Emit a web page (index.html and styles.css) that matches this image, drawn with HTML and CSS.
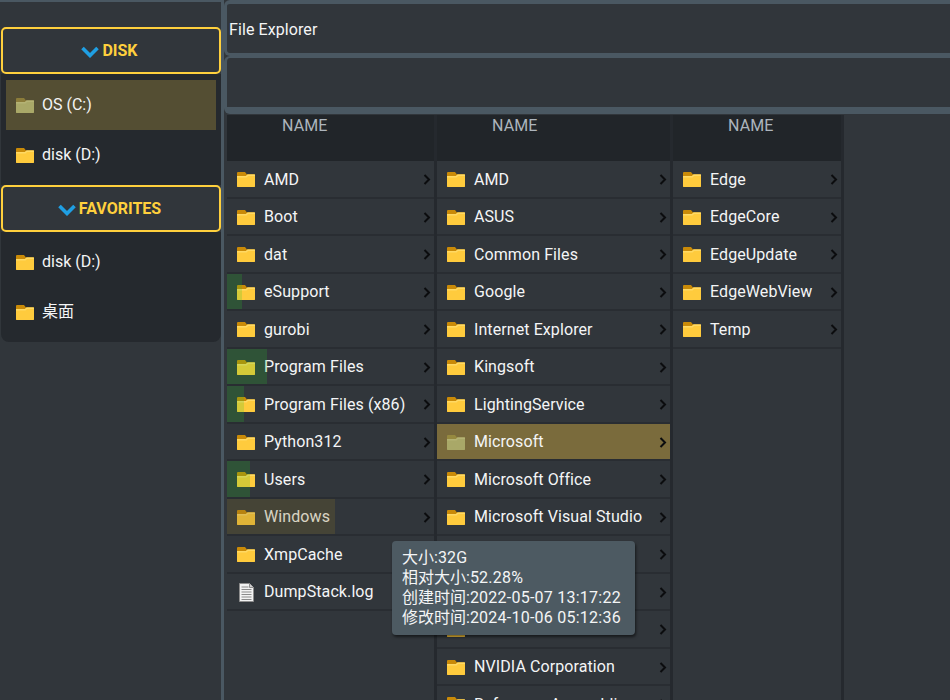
FILE: index.html
```html
<!DOCTYPE html>
<html lang="en">
<head>
<meta charset="utf-8">
<title>File Explorer</title>
<link rel="stylesheet" href="styles.css">
</head>
<body>
<svg class="defs" width="0" height="0" aria-hidden="true">
  <symbol id="folder" viewBox="0 0 18 15">
    <path d="M0 1a1 1 0 0 1 1-1h7l2 2.500H17a1 1 0 0 1 1 1V14a1 1 0 0 1-1 1H1a1 1 0 0 1-1-1z" fill="var(--tab)"/>
    <path d="M0 4h9l1.500-1.500h6.800a.7.700 0 0 1 .7.700V14.300a.7.700 0 0 1-.7.700H.7a.7.700 0 0 1-.7-.700z" fill="var(--body)"/>
    <path d="M0 4h9l1.500-1.500H18V4H11L9.500 5.500H0z" fill="var(--hi)"/>
  </symbol>
  <symbol id="file" viewBox="0 0 15 19">
    <path d="M.5.500h10l4 4v14H.5z" fill="#f2f2f2" stroke="#8d8d8d"/>
    <path d="M10.500.500v4h4" fill="#cfcfcf" stroke="#8d8d8d"/>
    <path d="M2.500 4h7M2.500 6.500h10M2.500 9h10M2.500 11.500h10M2.500 14h10M2.500 16.500h10" stroke="#8a8a8a" fill="none"/>
  </symbol>
  <symbol id="chev" viewBox="0 0 8 11">
    <path d="M1.500 1 6 5.500 1.500 10" fill="none" stroke="#0b0c0e" stroke-width="2"/>
  </symbol>
  <symbol id="down" viewBox="0 0 18 12">
    <path d="M1.500 2 9 9.500 16.500 2" fill="none" stroke="#1f9fe3" stroke-width="3.600"/>
  </symbol>
</svg>

<div class="app">
  <aside class="sidebar">
    <div class="sidebar-inner">
      <div class="group-head"><svg class="down"><use href="#down"/></svg><span>DISK</span></div>
      <ul class="group">
        <li class="drive is-current"><svg class="folder"><use href="#folder"/></svg>OS (C:)</li>
        <li class="drive"><svg class="folder"><use href="#folder"/></svg>disk (D:)</li>
      </ul>
      <div class="group-head"><svg class="down"><use href="#down"/></svg><span>FAVORITES</span></div>
      <ul class="group group-last">
        <li class="drive"><svg class="folder"><use href="#folder"/></svg>disk (D:)</li>
        <li class="drive"><svg class="folder"><use href="#folder"/></svg>桌面</li>
      </ul>
    </div>
  </aside>

  <main class="main">
    <div class="box box-title">File Explorer</div>
    <div class="box box-path"></div>
    <div class="columns">
      <section class="col col-a">
        <div class="col-head">NAME</div>
        <div class="row"><svg class="folder"><use href="#folder"/></svg><span class="name">AMD</span><svg class="chev"><use href="#chev"/></svg></div>
        <div class="row"><svg class="folder"><use href="#folder"/></svg><span class="name">Boot</span><svg class="chev"><use href="#chev"/></svg></div>
        <div class="row"><svg class="folder"><use href="#folder"/></svg><span class="name">dat</span><svg class="chev"><use href="#chev"/></svg></div>
        <div class="row"><i class="bar bar-green" style="width:15px"></i><svg class="folder"><use href="#folder"/></svg><span class="name">eSupport</span><svg class="chev"><use href="#chev"/></svg></div>
        <div class="row"><svg class="folder"><use href="#folder"/></svg><span class="name">gurobi</span><svg class="chev"><use href="#chev"/></svg></div>
        <div class="row"><i class="bar bar-green" style="width:40px"></i><svg class="folder"><use href="#folder"/></svg><span class="name">Program Files</span><svg class="chev"><use href="#chev"/></svg></div>
        <div class="row"><i class="bar bar-green" style="width:17px"></i><svg class="folder"><use href="#folder"/></svg><span class="name">Program Files (x86)</span><svg class="chev"><use href="#chev"/></svg></div>
        <div class="row"><svg class="folder"><use href="#folder"/></svg><span class="name">Python312</span><svg class="chev"><use href="#chev"/></svg></div>
        <div class="row"><i class="bar bar-green" style="width:23px"></i><svg class="folder"><use href="#folder"/></svg><span class="name">Users</span><svg class="chev"><use href="#chev"/></svg></div>
        <div class="row"><i class="bar bar-amber" style="width:108px"></i><svg class="folder"><use href="#folder"/></svg><span class="name">Windows</span><svg class="chev"><use href="#chev"/></svg></div>
        <div class="row"><svg class="folder"><use href="#folder"/></svg><span class="name">XmpCache</span><svg class="chev"><use href="#chev"/></svg></div>
        <div class="row"><svg class="file"><use href="#file"/></svg><span class="name">DumpStack.log</span></div>
      </section>
      <section class="col col-b">
        <div class="col-head">NAME</div>
        <div class="row"><svg class="folder"><use href="#folder"/></svg><span class="name">AMD</span><svg class="chev"><use href="#chev"/></svg></div>
        <div class="row"><svg class="folder"><use href="#folder"/></svg><span class="name">ASUS</span><svg class="chev"><use href="#chev"/></svg></div>
        <div class="row"><svg class="folder"><use href="#folder"/></svg><span class="name">Common Files</span><svg class="chev"><use href="#chev"/></svg></div>
        <div class="row"><svg class="folder"><use href="#folder"/></svg><span class="name">Google</span><svg class="chev"><use href="#chev"/></svg></div>
        <div class="row"><svg class="folder"><use href="#folder"/></svg><span class="name">Internet Explorer</span><svg class="chev"><use href="#chev"/></svg></div>
        <div class="row"><svg class="folder"><use href="#folder"/></svg><span class="name">Kingsoft</span><svg class="chev"><use href="#chev"/></svg></div>
        <div class="row"><svg class="folder"><use href="#folder"/></svg><span class="name">LightingService</span><svg class="chev"><use href="#chev"/></svg></div>
        <div class="row is-selected"><svg class="folder"><use href="#folder"/></svg><span class="name">Microsoft</span><svg class="chev"><use href="#chev"/></svg></div>
        <div class="row"><svg class="folder"><use href="#folder"/></svg><span class="name">Microsoft Office</span><svg class="chev"><use href="#chev"/></svg></div>
        <div class="row"><svg class="folder"><use href="#folder"/></svg><span class="name">Microsoft Visual Studio</span><svg class="chev"><use href="#chev"/></svg></div>
        <div class="row"><svg class="folder"><use href="#folder"/></svg><span class="name"></span><svg class="chev"><use href="#chev"/></svg></div>
        <div class="row"><svg class="folder"><use href="#folder"/></svg><span class="name"></span><svg class="chev"><use href="#chev"/></svg></div>
        <div class="row"><svg class="folder"><use href="#folder"/></svg><span class="name"></span><svg class="chev"><use href="#chev"/></svg></div>
        <div class="row"><svg class="folder"><use href="#folder"/></svg><span class="name">NVIDIA Corporation</span><svg class="chev"><use href="#chev"/></svg></div>
        <div class="row"><svg class="folder"><use href="#folder"/></svg><span class="name">Reference Assemblies</span><svg class="chev"><use href="#chev"/></svg></div>
      </section>
      <section class="col col-c">
        <div class="col-head">NAME</div>
        <div class="row"><svg class="folder"><use href="#folder"/></svg><span class="name">Edge</span><svg class="chev"><use href="#chev"/></svg></div>
        <div class="row"><svg class="folder"><use href="#folder"/></svg><span class="name">EdgeCore</span><svg class="chev"><use href="#chev"/></svg></div>
        <div class="row"><svg class="folder"><use href="#folder"/></svg><span class="name">EdgeUpdate</span><svg class="chev"><use href="#chev"/></svg></div>
        <div class="row"><svg class="folder"><use href="#folder"/></svg><span class="name">EdgeWebView</span><svg class="chev"><use href="#chev"/></svg></div>
        <div class="row"><svg class="folder"><use href="#folder"/></svg><span class="name">Temp</span><svg class="chev"><use href="#chev"/></svg></div>
      </section>
    </div>
  </main>
</div>

<div class="tooltip">
  <div>大小:<span class="num">32G</span></div>
  <div>相对大小:<span class="num">52.28%</span></div>
  <div>创建时间:<span class="num">2022-05-07 13:17:22</span></div>
  <div>修改时间:<span class="num">2024-10-06 05:12:36</span></div>
</div>
</body>
</html>
```

FILE: styles.css
```css
* { box-sizing: border-box; }

html, body {
  margin: 0;
  height: 100%;
  overflow: hidden;
  background: #31363b;
}

body {
  position: relative;
  color: #f4f5f6;
  font: 16px/20px Roboto, "Noto Sans CJK SC", sans-serif;
  --tab: #c98a08;
  --body: #ffcb3d;
  --hi: #ffd964;
}

.defs { position: absolute; }

ul { list-style: none; margin: 0; padding: 0; }

.app {
  display: flex;
  height: 700px;
  border-top: 2px solid #4a5862;
}

/* sidebar */
.sidebar {
  flex: 0 0 224px;
  padding: 25px 0 0 1px;
  border-right: 3px solid #4a5862;
}

.sidebar-inner {
  display: flex;
  flex-direction: column;
  width: 220px;
}

.group-head {
  display: flex;
  align-items: center;
  justify-content: center;
  gap: 3px;
  height: 47px;
  padding-right: 3px;
  border: 2px solid #ffd03d;
  border-radius: 5px;
  background: #31363b;
  color: #ffd03d;
  font-weight: 700;
}

.down { width: 18px; height: 12px; margin-top: 2px; }

.group {
  display: flex;
  flex-direction: column;
  padding: 6px 5px 5px;
  background: #25292e;
}

.group-last {
  padding-top: 5px;
  padding-bottom: 5px;
  border-radius: 0 0 8px 8px;
}

.drive {
  display: flex;
  align-items: center;
  gap: 8px;
  height: 50px;
  padding-left: 10px;
}

.is-current {
  background: #544e33;
  --tab: #8b7c3a;
  --body: #a9a868;
  --hi: #b4b274;
}

.folder { flex: none; width: 18px; height: 15px; }
.file { flex: none; width: 15px; height: 19px; margin: 0 1px 0 2px; }

/* main */
.main {
  flex: 1;
  min-width: 0;
  display: flex;
  flex-direction: column;
  margin-top: -2px;
  background: #31363b;
  letter-spacing: .09px;
}

.box {
  border: 3px solid #4a5862;
  border-right: 0;
  border-radius: 6px 0 0 6px;
  background: #31363b;
}

.box-title {
  display: flex;
  align-items: center;
  height: 56px;
  padding: 2px 0 0 2px;
  border-top-width: 4px;
}

.box-path {
  height: 58px;
  border-top-width: 2px;
  border-bottom-width: 7px;
}

.columns {
  display: flex;
  flex: 1;
  min-height: 0;
  margin-top: 1px;
}

.col {
  flex: none;
  overflow: hidden;
  border-right: 3px solid #25292e;
}

.col-a { width: 213px; padding-left: 3px; }
.col-b { width: 236px; }
.col-c { width: 171px; }

.col-head {
  height: 46px;
  padding: 1px 0 0 55px;
  background: #212529;
  color: #adb5bd;
}

.row {
  position: relative;
  display: flex;
  align-items: center;
  height: 37.5px;
  padding: 2px 3px 0 10px;
  border-bottom: 2px solid #292d32;
}

.name {
  flex: 1;
  min-width: 0;
  margin-left: 9px;
  white-space: nowrap;
}

.chev { flex: none; width: 8px; height: 11px; }

.bar {
  position: absolute;
  left: 0;
  top: 0;
  bottom: 0;
}

.bar-green { background: rgba(40, 200, 40, .2); }
.bar-amber { background: rgba(133, 110, 39, .25); }

.is-selected {
  background: #7a6b3c;
  --tab: #96893f;
  --body: #a9a868;
  --hi: #b4b274;
}

/* tooltip */
.tooltip {
  position: absolute;
  left: 392px;
  top: 541px;
  width: 243px;
  height: 94px;
  padding: 7px 10px;
  border-radius: 4px;
  background: #4d5a62;
  box-shadow: 1px 2px 3px rgba(0, 0, 0, .55);
  white-space: nowrap;
}

.num { letter-spacing: .24px; }
```
